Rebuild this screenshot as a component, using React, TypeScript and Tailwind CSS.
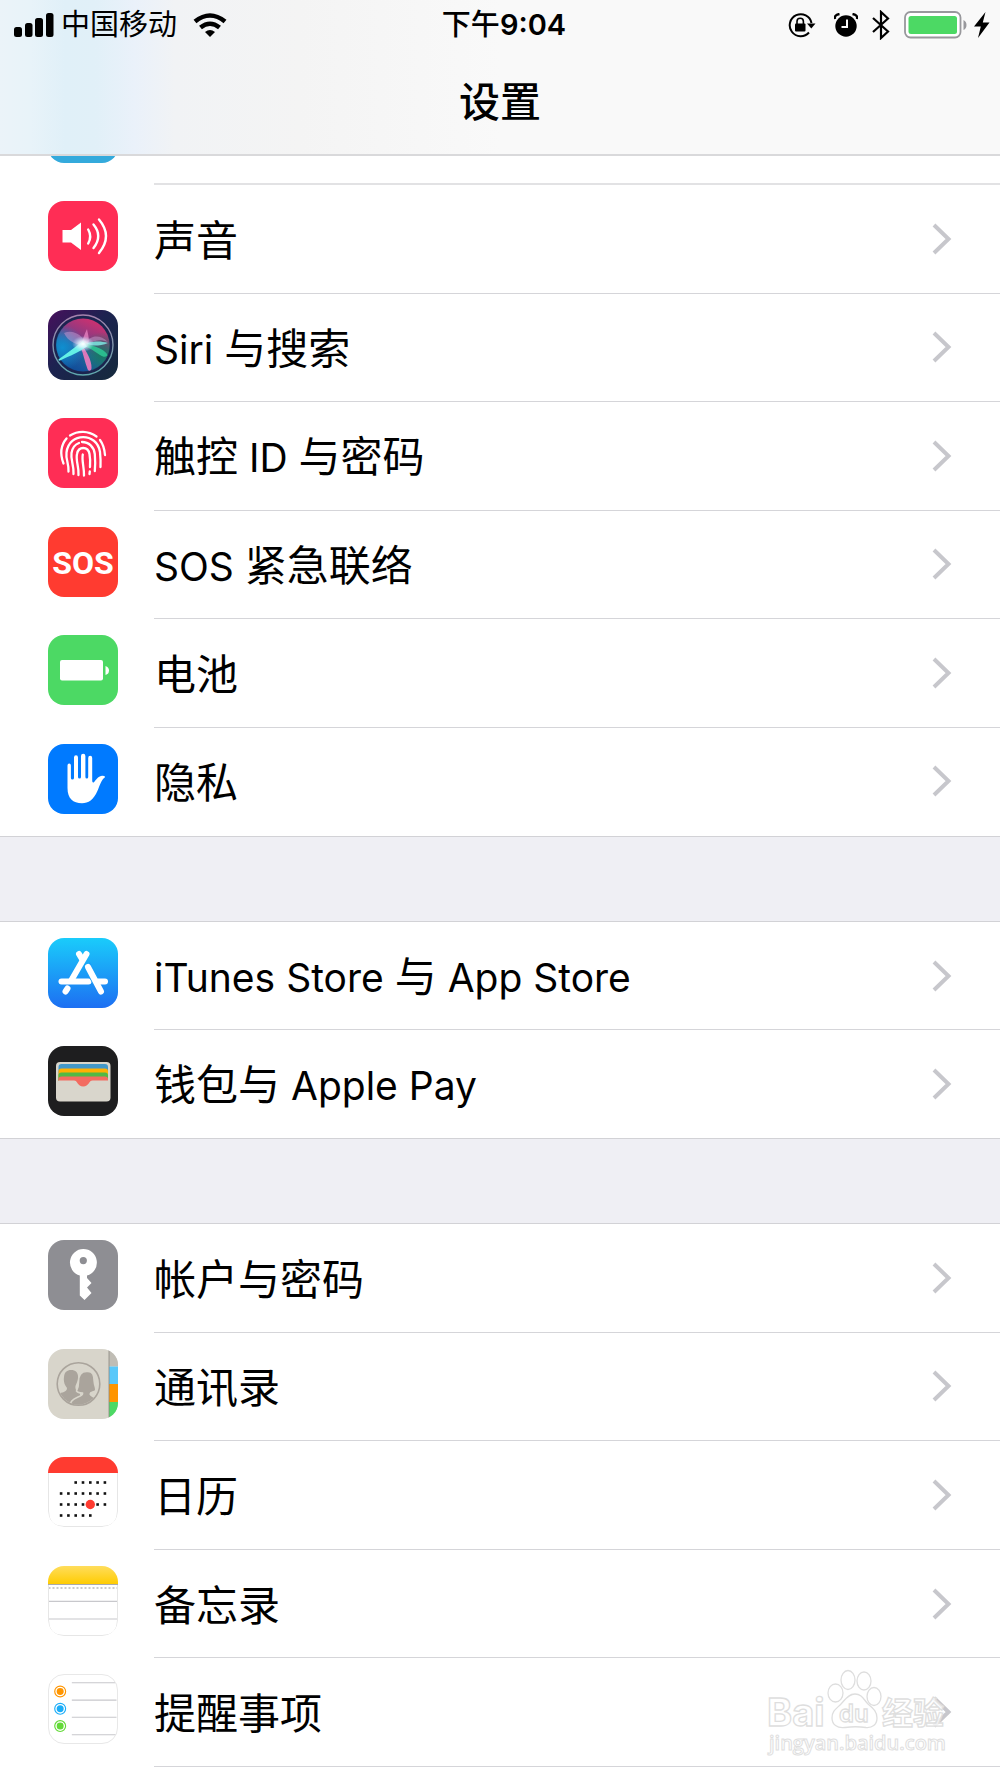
import type { ReactNode } from "react";

function Tile({ className = "", children }: { className?: string; children?: ReactNode }) {
  return (
    <span className={`block size-[70px] shrink-0 overflow-hidden rounded-[16px] ${className}`}>
      <svg viewBox="0 0 70 70" className="size-full" aria-hidden="true">
        {children}
      </svg>
    </span>
  );
}

const SoundIcon = () => (
  <Tile className="bg-[#ff2d55]">
    <path d="M14.500 29h8.500l10-7.500v27.500l-10-7.500h-8.500z" fill="#fff" />
    <g fill="none" stroke="#fff" strokeWidth="2.400" strokeLinecap="round">
      <path d="M40.200 28.500q4 7 0 14" />
      <path d="M45.500 23.500q9.500 11.500 0 23.500" />
      <path d="M51 18.500q14 16.500 0 33.500" />
    </g>
  </Tile>
);

const SiriIcon = () => (
  <Tile>
    <defs>
      <linearGradient id="siriBg" x1="0" y1="0" x2="1" y2="1">
        <stop offset="0" stopColor="#47105c" />
        <stop offset="0.450" stopColor="#1c2350" />
        <stop offset="1" stopColor="#152a3c" />
      </linearGradient>
      <linearGradient id="siriOrb" x1="0.700" y1="0" x2="0.250" y2="1">
        <stop offset="0" stopColor="#d2306e" />
        <stop offset="0.350" stopColor="#8b3a82" />
        <stop offset="0.600" stopColor="#2763a4" />
        <stop offset="1" stopColor="#0c4a96" />
      </linearGradient>
      <radialGradient id="siriGreen" cx="0.850" cy="0.680" r="0.420">
        <stop offset="0" stopColor="#157a60" />
        <stop offset="1" stopColor="#157a60" stopOpacity="0" />
      </radialGradient>
      <radialGradient id="siriBlue" cx="0.120" cy="0.550" r="0.420">
        <stop offset="0" stopColor="#0f8fd0" />
        <stop offset="1" stopColor="#0f8fd0" stopOpacity="0" />
      </radialGradient>
      <radialGradient id="siriCore">
        <stop offset="0" stopColor="#fff" />
        <stop offset="0.400" stopColor="#e8f7ff" stopOpacity="0.800" />
        <stop offset="1" stopColor="#b8e0ff" stopOpacity="0" />
      </radialGradient>
      <linearGradient id="siriRing" x1="0" y1="0" x2="0" y2="1">
        <stop offset="0" stopColor="#a583ad" />
        <stop offset="1" stopColor="#5ea7ad" />
      </linearGradient>
    </defs>
    <rect width="70" height="70" fill="url(#siriBg)" />
    <circle cx="35" cy="35" r="29" fill="#1b2450" />
    <circle cx="35" cy="35" r="26.500" fill="url(#siriOrb)" />
    <circle cx="35" cy="35" r="27" fill="url(#siriGreen)" />
    <circle cx="35" cy="35" r="27" fill="url(#siriBlue)" />
    <path d="M16 23c9-4 18 2 22 10 4-8 14-9 22-1-10-4-16 0-22 4-9-1-18-4-22-13z" fill="#d9a0d8" opacity="0.450" />
    <path d="M33 34c2-5 3-9 6-15 1 6 3 10 1 17z" fill="#f08ac8" opacity="0.700" />
    <path d="M39 33c8-2 14-2 21 0-7 3-14 3-21 2z" fill="#7de8e0" opacity="0.850" />
    <path d="M37 33c8 3 18 5 22 11 1 3-3 4-7 1-6-4-10-7-16-9z" fill="#2cc392" opacity="0.900" />
    <path d="M34 35c4 6 10 15 9.500 23 0 3-3 4-4 1-3-8-4-15-7-22z" fill="#f07abf" opacity="0.900" />
    <path d="M35 31C27 37 18 44 11 49c-1 1-.500 2 1 1.500 10-4.500 20-9 27-14z" fill="#63f0e6" />
    <ellipse cx="35" cy="34" rx="11" ry="8" fill="url(#siriCore)" />
    <circle cx="35" cy="35" r="30" fill="none" stroke="url(#siriRing)" strokeWidth="1.400" />
  </Tile>
);

const FingerprintIcon = () => (
  <Tile className="bg-[#ff2d55]">
    <g fill="none" stroke="#fff" strokeWidth="2.300" strokeLinecap="round">
      <path d="M22 17.500c8-5 18-5 26.500 1" />
      <path d="M15.500 45.500C11.500 35 13 27 18.500 20.500" />
      <path d="M52 22c3 4 4.500 9 5 15" />
      <path d="M20.500 53.500c.500-8-3-12-2-19C21 14 49 14 52 34c.500 5 .800 10 .500 15" />
      <path d="M25.500 56c.500-9-3-14-2-21 .800-5 3.500-8.500 7.500-10" />
      <path d="M34 24c7 0 12 5 12.800 12 .500 6 .700 11 0 17" />
      <path d="M30.500 57c.500-9-3-14-1.500-21 1.500-8 11-8 12.500 0 .700 4 .800 9 .500 13" />
      <path d="M36 57.500c.300-8-2.500-15-1.200-21" />
      <path d="M41.800 53.500l-.300 2.500" />
    </g>
  </Tile>
);

const SosIcon = () => (
  <Tile className="bg-[#ff3b30]">
    <text x="35" y="47" textAnchor="middle" fontFamily="'Liberation Sans Narrow', Roboto, sans-serif" fontSize="32" fontWeight="700" fill="#fff">
      SOS
    </text>
  </Tile>
);

const BatteryIcon = () => (
  <Tile className="bg-[#4cd964]">
    <rect x="12" y="25" width="43" height="20.500" rx="2" fill="#fff" />
    <path d="M57.500 31q3.500 1 3.500 4.500t-3.500 4.500z" fill="#fff" />
  </Tile>
);

const HandIcon = () => (
  <Tile className="bg-[#007aff]">
    <path
      d="M19.500 21.500q0-2 1.700-2t1.700 2V34q0 1.500 1.500 1.500T26 34V13.500q0-2.200 2-2.200t2 2.200V33q0 1.500 1.500 1.500T33 33V12q0-2.200 2.200-2.200T37.400 12V33q0 1.500 1.400 1.500T40.200 33V14q0-2.200 2-2.200t2 2.200V36.500q0 3 2 1.500c2.500-3 4.500-6 8-6.200q3.200 0 2.800 1.500c-3.500 2-5 8-7.500 13.500C45.500 56 40.500 59.200 34 59.200c-9 0-14.500-4.700-14.500-15.200z"
      fill="#fff"
    />
  </Tile>
);

const AppStoreIcon = () => (
  <Tile>
    <defs>
      <linearGradient id="storeBg" x1="0" y1="0" x2="0" y2="1">
        <stop offset="0" stopColor="#1accfb" />
        <stop offset="1" stopColor="#1d6ff2" />
      </linearGradient>
    </defs>
    <rect width="70" height="70" fill="url(#storeBg)" />
    <g stroke="#fff" strokeWidth="6" strokeLinecap="round">
      <path d="M13.500 43.500h27" />
      <path d="M38.500 16L23.500 42" />
      <path d="M31 16l3 5" />
      <path d="M19.500 50.500l-2 3" />
    </g>
    <path d="M38.500 26.500l10 17.500" stroke="#1ca0f8" strokeWidth="8.500" />
    <g stroke="#fff" strokeWidth="6" strokeLinecap="round">
      <path d="M50 43.500h7" />
      <path d="M40 29l13 24.500" />
    </g>
  </Tile>
);

const WalletIcon = () => (
  <Tile className="bg-[#1e1e1f]">
    <rect x="8" y="16" width="54.500" height="39.500" rx="4" fill="#d9d6cc" />
    <path d="M10.500 35V21q0-3 3-3h43.500q3 0 3 3v14z" fill="#4298c9" />
    <path d="M10.500 35v-9.500q0-3 3-3h43.500q3 0 3 3V35z" fill="#ffb003" />
    <path d="M10.500 35v-5.500q0-3 3-3h43.500q3 0 3 3V35z" fill="#52b944" />
    <path d="M10.500 35v-2q0-2.500 3-2.500h43.500q3 0 3 2.500v2z" fill="#f36c61" />
    <path d="M10.500 34.500h17c2.500 0 2.500 6 7.500 6s5-6 7.500-6H60V40H10z" fill="#d9d6cc" />
    <path d="M26 34h18.500c-3.500.500-3.500 6.500-9.300 6.500S29.500 34.500 26 34z" fill="#f36c61" />
  </Tile>
);

const KeyIcon = () => (
  <Tile className="bg-[#8e8e93]">
    <path
      fillRule="evenodd"
      d="M35.300 9A13.500 13.500 0 0 1 39 35.500V38l4.500 5-4.500 4.500 4.500 5.500-7 7-4.700-4.500v-20A13.500 13.500 0 0 1 35.300 9zm0 8a3.600 3.600 0 1 0 0 7.200 3.600 3.600 0 0 0 0-7.200z"
      fill="#fff"
    />
  </Tile>
);

const ContactsIcon = () => (
  <Tile className="bg-[#d8d5cb]">
    <defs>
      <clipPath id="contactsDisc">
        <circle cx="30.500" cy="35" r="20.500" />
      </clipPath>
    </defs>
    <rect x="61" width="9" height="17" fill="#c0bdb5" />
    <rect x="61" y="17.500" width="9" height="17.500" fill="#5ac8fa" />
    <rect x="61" y="35" width="9" height="18" fill="#ff9500" />
    <rect x="61" y="53" width="9" height="17" fill="#4cd964" />
    <path d="M61 0v70" stroke="#8b8880" strokeWidth="0.800" />
    <circle cx="30.500" cy="35" r="21.300" fill="none" stroke="#aaa49c" strokeWidth="1.600" />
    <g clipPath="url(#contactsDisc)" fill="#aaa49c">
      <path d="M23 21c5 0 7.500 3 7 8-.300 4-2 6-2.500 8-.500 4 1 5 4 6l3 14H8V46c4-3 11-2 11-7-3-4-3.500-7-3-11 .500-5 3-7 7-7z" />
      <path
        d="M38.500 22.500c7-1 7.500 5 7.700 10 .200 4 2 6 1.500 9-2 2-5.500 1-5.500 3.500 1 4 10 3 10 8V60H21c1-8 4-10 9-12 3-1 5-2 4.500-4-2 0-5-.500-6-2 1.500-3 2-5 2-9 0-6 2.500-10.500 8-10.500z"
        stroke="#d8d5cb"
        strokeWidth="1.600"
      />
    </g>
  </Tile>
);

const calendarDots = [
  { y: 25.5, from: 2, to: 6 },
  { y: 36.5, from: 0, to: 6 },
  { y: 47.5, from: 0, to: 6 },
  { y: 58.5, from: 0, to: 4 },
];

const CalendarIcon = () => (
  <Tile className="bg-white">
    <rect width="70" height="16" fill="#ff3b30" />
    {calendarDots.map(({ y, from, to }) =>
      Array.from({ length: to - from + 1 }, (_, i) => (
        <rect key={`${y}-${i}`} x={11.8 + (from + i) * 7.3} y={y - 1.3} width="2.600" height="2.600" fill="#111" />
      )),
    )}
    <circle cx="42.300" cy="47.500" r="4.700" fill="#ff3b30" />
    <path d="M.500 16V54q0 15.500 15.500 15.500h38q15.500 0 15.500-15.500V16" fill="none" stroke="#e6e6e6" />
  </Tile>
);

const NotesIcon = () => (
  <Tile className="bg-white">
    <defs>
      <linearGradient id="notesTop" x1="0" y1="0" x2="0" y2="1">
        <stop offset="0" stopColor="#ffdd5c" />
        <stop offset="1" stopColor="#ffcc02" />
      </linearGradient>
    </defs>
    <rect width="70" height="18" fill="url(#notesTop)" />
    <path d="M0 18.500h70" stroke="#aaa" />
    <path d="M.500 22h70" stroke="#bbb" strokeWidth="1.600" strokeDasharray="2 2" />
    <path d="M0 35.300h70M0 53h70" stroke="#c8c8cc" strokeWidth="1.200" />
    <path d="M.500 19V54q0 15.500 15.500 15.500h38q15.500 0 15.500-15.500V19" fill="none" stroke="#e6e6e6" />
  </Tile>
);

const reminderDots = [
  { y: 17, color: "#ff9500" },
  { y: 34.8, color: "#1badf8" },
  { y: 52.6, color: "#63da38" },
];

const RemindersIcon = () => (
  <Tile className="border border-[#e8e8e8] bg-white">
    <path d="M23.500 8h46M23.500 25.800h46M23.500 43.500h46M23.500 61.500h46" stroke="#c8c8cc" strokeWidth="1.200" />
    {reminderDots.map(({ y, color }) => (
      <g key={color}>
        <circle cx="11.500" cy={y} r="5.600" fill="none" stroke={color} strokeWidth="1.200" />
        <circle cx="11.500" cy={y} r="3.600" fill={color} />
      </g>
    ))}
  </Tile>
);

function Chevron() {
  return (
    <svg viewBox="0 0 20 32" className="mb-1 h-8 w-5 shrink-0" aria-hidden="true">
      <path d="M2 2l14.500 14L2 30" fill="none" stroke="#c7c7cc" strokeWidth="4" />
    </svg>
  );
}

/* Latin runs are set a little smaller than the Chinese characters beside them. */
function Label({ text }: { text: string }) {
  return (
    <span className="text-[42px] leading-[52px]">
      {text.split(/([A-Za-z ]+)/).map((run, i) =>
        i % 2 === 1 ? (
          <span key={i} className="text-[39px] whitespace-pre">
            {run}
          </span>
        ) : (
          run
        ),
      )}
    </span>
  );
}

function Row({ icon, label, lastLine }: { icon: ReactNode; label: string; lastLine: boolean }) {
  return (
    <li className="group flex pl-12">
      <a href="#" className="flex flex-1 text-black">
        <span className="pt-4">{icon}</span>
        <span
          className={`ml-9 flex flex-1 items-center justify-between border-b border-[#d5d5d9] pt-1 pr-12 ${
            lastLine ? "" : "group-last:border-transparent"
          }`}
        >
          <Label text={label} />
          <Chevron />
        </span>
      </a>
    </li>
  );
}

function Group({
  items,
  className,
  lastLine = false,
}: {
  items: [string, ReactNode][];
  className: string;
  lastLine?: boolean;
}) {
  return (
    <ul className={`grid auto-rows-fr bg-white ${className}`}>
      {items.map(([label, icon]) => (
        <Row key={label} label={label} icon={icon} lastLine={lastLine} />
      ))}
    </ul>
  );
}

function StatusBar() {
  return (
    <div className="grid h-[50px] grid-cols-[1fr_auto_1fr] items-center pr-[10px] pl-[14px] text-[29px] leading-9">
      <div className="flex items-center">
        <svg viewBox="0 0 40 26" className="h-[26px] w-10" aria-label="信号">
          <rect x="0" y="15" width="8" height="10" rx="2.500" />
          <rect x="11" y="11" width="7.500" height="14" rx="2.500" />
          <rect x="21" y="6" width="8" height="19" rx="2.500" />
          <rect x="32" y="1" width="7.500" height="24" rx="2.500" />
        </svg>
        <span className="ml-[7px]">中国移动</span>
        <svg viewBox="0 0 34 24" className="ml-4 h-6 w-[34px]" aria-label="无线局域网">
          <g fill="none" stroke="#000" strokeWidth="4.600">
            <path d="M2 8.500Q17-3.500 32 8.500" />
            <path d="M7.500 14.500Q17 7 26.500 14.500" />
          </g>
          <path d="M12 19q5-4 10 0l-5 5z" />
        </svg>
      </div>
      <span className="pl-1 font-medium">
        下午<span className="font-semibold">9:04</span>
      </span>
      <div className="flex items-center justify-end">
        <svg viewBox="0 0 28 26" className="h-[26px] w-7" aria-label="方向锁定">
          <path d="M21 20.500A11 11 0 1 1 23.500 11" fill="none" stroke="#000" strokeWidth="2" />
          <path d="M19 11.500h8.500l-4.200 5z" />
          <rect x="7" y="11.500" width="10.500" height="8" rx="1" />
          <path d="M9 12V9.500q0-3.200 3.200-3.200t3.200 3.200V12" fill="none" stroke="#000" strokeWidth="1.600" />
        </svg>
        <svg viewBox="0 0 24 24" className="ml-[18px] size-6" aria-label="闹钟">
          <circle cx="12" cy="13" r="10.700" />
          <path d="M1 6q-1-4 4.500-5M23 6q1-4-4.500-5" fill="none" stroke="#000" strokeWidth="2.400" />
          <path d="M13 6.500v7.500H7.500" fill="none" stroke="#f9f9f9" strokeWidth="2" />
        </svg>
        <svg viewBox="0 0 18 30" className="ml-[14px] h-[30px] w-[18px]" aria-label="蓝牙">
          <path d="M1 8l15 13.500-7 6.500V2l7 6.500L1 22" fill="none" stroke="#000" strokeWidth="2.200" />
        </svg>
        <svg viewBox="0 0 64 28" className="ml-[14px] h-7 w-16" aria-label="电池">
          <rect x="1" y="1" width="55.500" height="25.500" rx="5.500" fill="#fff" stroke="#98989c" strokeWidth="1.800" />
          <rect x="4.500" y="5" width="48.500" height="18" rx="2.500" fill="#4cd964" />
          <path d="M59.500 9q3 1.500 3 5t-3 5z" fill="#98989c" />
        </svg>
        <svg viewBox="0 0 16 26" className="ml-[6px] h-[26px] w-4" aria-label="正在充电">
          <path d="M11.500 0L0 14.500h6.800L4 26 15.500 10.500H8.800z" />
        </svg>
      </div>
    </div>
  );
}

function Watermark() {
  return (
    <svg viewBox="0 0 184 90" className="pointer-events-none absolute right-[52px] bottom-[20px] h-[90px] w-[184px]" aria-hidden="true">
      <g fill="#fff" fillOpacity="0.750" stroke="#dedede" strokeWidth="1.300">
        <ellipse cx="71.500" cy="25" rx="7.500" ry="9" />
        <ellipse cx="84" cy="12" rx="7" ry="9.500" />
        <ellipse cx="100" cy="13" rx="7" ry="9" />
        <ellipse cx="110" cy="28.500" rx="7" ry="9" />
        <path d="M91 26c7 0 9 6 13 10 6 5 9 8 9 14 0 7-5 10-11 9.500-7-1-14-1-21 0-8 1-13-3-13-9.500 0-7 4-9 9-14 4-4 7-10 14-10z" />
        <g fontFamily="Inter, 'Noto Sans CJK SC', sans-serif" fontWeight="700">
          <text x="3" y="58" fontSize="38">Bai</text>
          <text x="75" y="54" fontSize="24" fontWeight="600">du</text>
          <text x="118" y="56" fontSize="31">经验</text>
          <text x="5" y="82" fontSize="20" fontFamily="'Open Sans', sans-serif" fontWeight="600" strokeWidth="1">jingyan.baidu.com</text>
        </g>
      </g>
    </svg>
  );
}

const general: [string, ReactNode][] = [
  ["声音", <SoundIcon />],
  ["Siri 与搜索", <SiriIcon />],
  ["触控 ID 与密码", <FingerprintIcon />],
  ["SOS 紧急联络", <SosIcon />],
  ["电池", <BatteryIcon />],
  ["隐私", <HandIcon />],
];

const store: [string, ReactNode][] = [
  ["iTunes Store 与 App Store", <AppStoreIcon />],
  ["钱包与 Apple Pay", <WalletIcon />],
];

const apps: [string, ReactNode][] = [
  ["帐户与密码", <KeyIcon />],
  ["通讯录", <ContactsIcon />],
  ["日历", <CalendarIcon />],
  ["备忘录", <NotesIcon />],
  ["提醒事项", <RemindersIcon />],
];

export default function App() {
  return (
    <div className="relative min-h-screen bg-white font-[Inter,'Noto_Sans_CJK_SC',sans-serif] text-black">
      <header className="border-b-2 border-[#d9d9db] bg-[#f9f9f9] bg-[linear-gradient(90deg,#ebf3f9_0%,#e8f3f9_6%,#e0f0f8_13%,#e1f0f8_19%,#eaf1fa_27%,#f1f3f5_35%,#f4f4f4_60%,#f9f9f9_100%)] bg-[length:500px_100%] bg-no-repeat">
        <StatusBar />
        <h1 className="flex h-[104px] items-center justify-center pt-0.5 text-[41px] font-medium">设置</h1>
      </header>
      <main>
        <div className="flex h-[29px] flex-col pl-12">
          <div className="h-[7px] w-[70px] overflow-hidden">
            <div className="-mt-[63px] h-[70px] rounded-[16px] bg-[#34aadc]" />
          </div>
          <div className="mt-auto ml-[106px] border-b-2 border-[#e2e2e4]" />
        </div>
        <Group items={general} className="min-h-[651px]" />
        <div className="h-[86px] border-y border-[#d2d2d6] bg-[#efeff4]" />
        <Group items={store} className="min-h-[216px]" />
        <div className="h-[86px] border-y border-[#d2d2d6] bg-[#efeff4]" />
        <Group items={apps} className="min-h-[543px]" lastLine />
      </main>
      <Watermark />
    </div>
  );
}
